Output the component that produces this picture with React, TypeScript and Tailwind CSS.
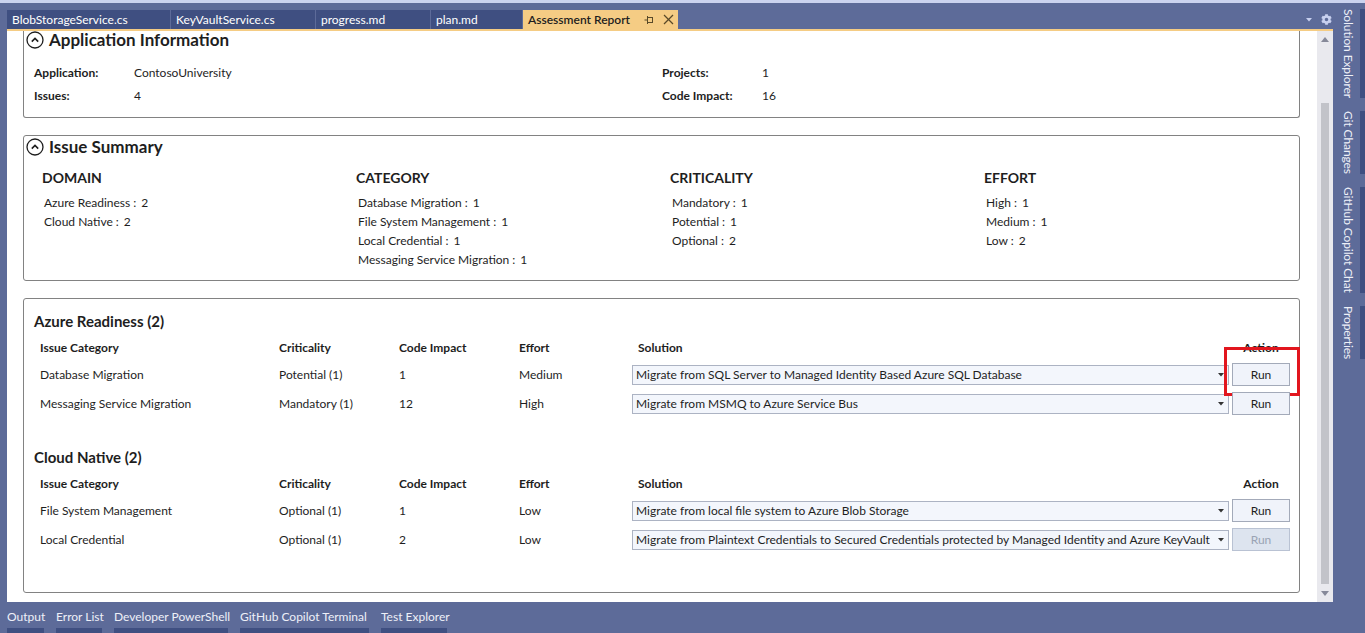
import React from 'react';
import { FaCog } from 'react-icons/fa';

const Chevron = () => (
  <svg width="18" height="18" viewBox="0 0 18 18" className="shrink-0">
    <circle cx="9" cy="9" r="8" fill="none" stroke="#1e1e1e" strokeWidth="1.3" />
    <polyline points="5.8,10.6 9,7.4 12.2,10.6" fill="none" stroke="#1e1e1e" strokeWidth="1.6" />
  </svg>
);

const Tri = ({ color = '#333' }: { color?: string }) => (
  <svg width="6" height="4" viewBox="0 0 6 4">
    <polygon points="0,0 6,0 3,3.5" fill={color} />
  </svg>
);

type Row = { cat: string; crit: string; impact: string; effort: string; sol: string; disabled?: boolean; highlight?: boolean };

const azure: Row[] = [
  { cat: 'Database Migration', crit: 'Potential (1)', impact: '1', effort: 'Medium', sol: 'Migrate from SQL Server to Managed Identity Based Azure SQL Database', highlight: true },
  { cat: 'Messaging Service Migration', crit: 'Mandatory (1)', impact: '12', effort: 'High', sol: 'Migrate from MSMQ to Azure Service Bus' },
];
const cloud: Row[] = [
  { cat: 'File System Management', crit: 'Optional (1)', impact: '1', effort: 'Low', sol: 'Migrate from local file system to Azure Blob Storage' },
  { cat: 'Local Credential', crit: 'Optional (1)', impact: '2', effort: 'Low', sol: 'Migrate from Plaintext Credentials to Secured Credentials protected by Managed Identity and Azure KeyVault', disabled: true },
];

const IssueTable = ({ title, rows }: { title: string; rows: Row[] }) => (
  <div>
    <div className="h-[20px] leading-[20px] text-[15px] font-bold">{title}</div>
    <div className="mt-[5px] pl-[6px] h-[24px] flex items-center font-bold">
      <div className="w-[239px]">Issue Category</div>
      <div className="w-[120px]">Criticality</div>
      <div className="w-[120px]">Code Impact</div>
      <div className="w-[113px]">Effort</div>
      <div className="w-[597px] pl-[6px]">Solution</div>
      <div className="ml-[3px] w-[58px] text-center">Action</div>
    </div>
    {rows.map((r) => (
      <div key={r.cat} className="pl-[6px] h-[29px] flex items-center">
        <div className="w-[239px]">{r.cat}</div>
        <div className="w-[120px]">{r.crit}</div>
        <div className="w-[120px]">{r.impact}</div>
        <div className="w-[113px]">{r.effort}</div>
        <div className="w-[597px] h-[20px] border border-[#acb3c3] bg-[#f3f6fc] flex items-center justify-between pl-[3px] pr-[4px]">
          <span className="whitespace-nowrap overflow-hidden">{r.sol}</span>
          <Tri />
        </div>
        <div className="ml-[3px] w-[58px] relative">
          {r.disabled ? (
            <div className="h-[23px] border border-[#b9c2d3] bg-[#dde4ef] text-[#9aa3b4] flex items-center justify-center">Run</div>
          ) : (
            <div className="h-[23px] border border-[#a3aab9] bg-[#f0f3fa] flex items-center justify-center">Run</div>
          )}
          {r.highlight && (
            <div className="absolute left-[-8px] top-[-16px] w-[76px] h-[49px] border-[3px] border-[#e2161e]" />
          )}
        </div>
      </div>
    ))}
  </div>
);

const summary = [
  { h: 'DOMAIN', items: [['Azure Readiness', '2'], ['Cloud Native', '2']] },
  { h: 'CATEGORY', items: [['Database Migration', '1'], ['File System Management', '1'], ['Local Credential', '1'], ['Messaging Service Migration', '1']] },
  { h: 'CRITICALITY', items: [['Mandatory', '1'], ['Potential', '1'], ['Optional', '2']] },
  { h: 'EFFORT', items: [['High', '1'], ['Medium', '1'], ['Low', '2']] },
];

const tabs = [
  { n: 'BlobStorageService.cs', w: 'w-[163px]' },
  { n: 'KeyVaultService.cs', w: 'w-[144px]' },
  { n: 'progress.md', w: 'w-[114px]' },
  { n: 'plan.md', w: 'w-[91px]' },
];

const sideTabs = ['Solution Explorer', 'Git Changes', 'GitHub Copilot Chat', 'Properties'];
const bottomTabs = [
  { n: 'Output', w: 'w-[37px]' },
  { n: 'Error List', w: 'w-[46px]' },
  { n: 'Developer PowerShell', w: 'w-[114px]' },
  { n: 'GitHub Copilot Terminal', w: 'w-[129px]' },
  { n: 'Test Explorer', w: 'w-[66px]' },
];

export default function App() {
  return (
    <div className="w-[1365px] h-[633px] bg-[#5d6b99] flex flex-col overflow-hidden font-['Lato',sans-serif] text-[12px] text-[#1e1e1e]">
      <div className="h-[3px] bg-[#cbd3ef] shrink-0" />
      <div className="flex h-[599px] shrink-0">
        <div className="w-[7px] shrink-0" />
        <div className="w-[1326px] flex flex-col shrink-0">
          <div className="h-[26px] flex items-end justify-between">
            <div className="flex items-end gap-[1px]">
              {tabs.map((t) => (
                <div key={t.n} className={`${t.w} h-[19px] bg-[#3f4f81] text-white pl-[5px] flex items-center whitespace-nowrap`}>
                  {t.n}
                </div>
              ))}
              <div className="w-[155px] h-[19px] bg-[#f5cc84] pl-[5px] flex items-center whitespace-nowrap font-semibold text-[#1e1e1e]">
                <span>Assessment Report</span>
                <svg width="10" height="10" viewBox="0 0 10 10" className="ml-[14px]">
                  <line x1="0.5" y1="5" x2="3" y2="5" stroke="#5a4a28" strokeWidth="1" />
                  <rect x="3.5" y="2.5" width="5" height="5" fill="none" stroke="#5a4a28" strokeWidth="1" />
                  <line x1="3.5" y1="1" x2="3.5" y2="9" stroke="#5a4a28" strokeWidth="1" />
                </svg>
                <svg width="11" height="11" viewBox="0 0 11 11" className="ml-[9px]">
                  <line x1="1" y1="1" x2="10" y2="10" stroke="#5a4a28" strokeWidth="1.3" />
                  <line x1="10" y1="1" x2="1" y2="10" stroke="#5a4a28" strokeWidth="1.3" />
                </svg>
              </div>
            </div>
            <div className="h-[19px] flex items-center gap-[9px] pr-[1px]">
              <Tri color="#c8d0ef" />
              <FaCog size={11} color="#c8d0ef" />
            </div>
          </div>
          <div className="h-[2px] bg-[#f5cc84] shrink-0" />
          <div className="flex h-[571px]">
            <div className="flex-1 bg-white pl-[16px] pr-[17px]">
              {/* Application Information (scrolled: top edge out of view) */}
              <div className="h-[87px] border border-t-0 border-[#828282] rounded-b-[3px]">
                <div className="h-[18px] flex items-center pl-[2px] gap-[5px]">
                  <Chevron />
                  <span className="text-[17px] leading-[18px] font-bold">Application Information</span>
                </div>
                <div className="mt-[12px] pl-[10px] grid grid-cols-[100px_528px_100px_1fr] leading-[23px]">
                  <div className="font-bold">Application:</div>
                  <div>ContosoUniversity</div>
                  <div className="font-bold">Projects:</div>
                  <div>1</div>
                  <div className="font-bold">Issues:</div>
                  <div>4</div>
                  <div className="font-bold">Code Impact:</div>
                  <div>16</div>
                </div>
              </div>
              {/* Issue Summary */}
              <div className="mt-[17px] h-[146px] border border-[#828282] rounded-[3px]">
                <div className="h-[22px] flex items-center pl-[2px] gap-[5px]">
                  <Chevron />
                  <span className="text-[17px] leading-[18px] font-bold">Issue Summary</span>
                </div>
                <div className="mt-[10px] pl-[18px] grid grid-cols-[314px_314px_314px_1fr]">
                  {summary.map((c) => (
                    <div key={c.h}>
                      <div className="h-[20px] leading-[20px] text-[14px] font-bold">{c.h}</div>
                      <div className="mt-[5px] pl-[2px]">
                        {c.items.map(([k, v]) => (
                          <div key={k} className="h-[19px] leading-[19px] whitespace-nowrap">
                            {k} :<span className="ml-[5px]">{v}</span>
                          </div>
                        ))}
                      </div>
                    </div>
                  ))}
                </div>
              </div>
              {/* Issues */}
              <div className="mt-[17px] h-[295px] border border-[#828282] rounded-[3px] pl-[10px] pt-[12px]">
                <IssueTable title="Azure Readiness (2)" rows={azure} />
                <div className="mt-[29px]">
                  <IssueTable title="Cloud Native (2)" rows={cloud} />
                </div>
              </div>
            </div>
            <div className="w-[16px] bg-[#e9e9ee] flex flex-col shrink-0">
              <div className="h-[17px] flex items-center justify-center">
                <svg width="8" height="5" viewBox="0 0 8 5"><polygon points="0,5 8,5 4,0" fill="#868999" /></svg>
              </div>
              <div className="mt-[55px] mx-[4px] h-[481px] bg-[#c2c3c9]" />
              <div className="flex-1" />
              <div className="h-[17px] flex items-center justify-center">
                <svg width="8" height="5" viewBox="0 0 8 5"><polygon points="0,0 8,0 4,5" fill="#868999" /></svg>
              </div>
            </div>
          </div>
        </div>
        <div className="w-[32px] shrink-0 pt-[6px] pl-[5px] flex flex-col gap-[13px]">
          {sideTabs.map((s) => (
            <div key={s} className="flex gap-[2px]">
              <div className="w-[20px] [writing-mode:vertical-rl] text-[#eef0f8] leading-[20px] whitespace-nowrap tracking-[-0.1px]">{s}</div>
              <div className="w-[5px] bg-[#3f4f81]" />
            </div>
          ))}
        </div>
      </div>
      <div className="flex-1 flex gap-[12px] pl-[7px] pt-[5px]">
        {bottomTabs.map((b) => (
          <div key={b.n} className={`${b.w} flex flex-col`}>
            <div className="h-[20px] leading-[20px] text-[#eef0f8] whitespace-nowrap">{b.n}</div>
            <div className="mt-[1px] h-[5px] bg-[#3f4f81]" />
          </div>
        ))}
      </div>
    </div>
  );
}
